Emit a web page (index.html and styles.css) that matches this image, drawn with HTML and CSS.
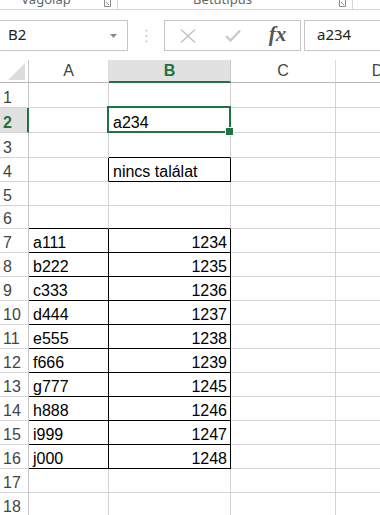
FILE: index.html
```html
<!DOCTYPE html>
<html lang="hu">
<head>
    <meta charset="UTF-8">
    <meta name="viewport" content="width=device-width, initial-scale=1.0">
    <title>Munkafüzet</title>
    <link rel="stylesheet" href="styles.css">
</head>
<body>

    <!-- ribbon group labels (cut off at the top) -->
    <div class="ribbon">
        <div class="group group-1">
            <span class="group-label">Vágólap</span>
            <svg class="launcher" width="7" height="9" viewBox="0 0 7 9"><path d="M0.5 0 V6.5 H6.5 M6.5 0 V6.5 M2 2 L5 5" stroke="#8a8a8a" fill="none"/></svg>
        </div>
        <div class="group group-2">
            <span class="group-label">Betűtípus</span>
            <svg class="launcher" width="7" height="9" viewBox="0 0 7 9"><path d="M0.5 0 V6.5 H6.5 M6.5 0 V6.5 M2 2 L5 5" stroke="#8a8a8a" fill="none"/></svg>
        </div>
    </div>

    <!-- formula bar -->
    <div class="fbar">
        <div class="namebox">
            <span>B2</span>
            <svg width="7" height="4" viewBox="0 0 7 4"><path d="M0 0 H7 L3.5 4 Z" fill="#8a8a8a"/></svg>
        </div>
        <div class="fbar-dots">
            <svg width="3" height="14" viewBox="0 0 3 14"><circle cx="1.5" cy="1.5" r="1" fill="#c4c4c4"/><circle cx="1.5" cy="7" r="1" fill="#c4c4c4"/><circle cx="1.5" cy="12.5" r="1" fill="#c4c4c4"/></svg>
        </div>
        <div class="fxbtns">
            <div class="fxbtn">
                <svg width="16" height="14" viewBox="0 0 16 14"><path d="M1 0.5 L15 13.5 M15 0.5 L1 13.5" stroke="#c2c2c2" stroke-width="1.4" fill="none"/></svg>
            </div>
            <div class="fxbtn">
                <svg width="16" height="13" viewBox="0 0 16 13"><path d="M1 7 L5.5 11.5 L15 1.5" stroke="#cbcbcb" stroke-width="2.4" fill="none"/></svg>
            </div>
            <div class="fxbtn fx">fx</div>
        </div>
        <div class="fxinput">a234</div>
    </div>

    <!-- sheet -->
    <div class="sheet">
        <div class="corner">
            <svg width="17" height="17" viewBox="0 0 17 17"><path d="M17 0 V17 H0 Z" fill="#dcdcdc"/></svg>
        </div>
        <div class="ch">A</div>
        <div class="ch ch-sel">B</div>
        <div class="ch">C</div>
        <div class="ch">D</div>

        <div class="rh">1</div><div class="cell"></div><div class="cell"></div><div class="cell"></div><div class="cell"></div>
        <div class="rh rh-sel">2</div><div class="cell"></div><div class="cell sel">a234</div><div class="cell"></div><div class="cell"></div>
        <div class="rh">3</div><div class="cell"></div><div class="cell bk-b"></div><div class="cell"></div><div class="cell"></div>
        <div class="rh">4</div><div class="cell bk-r"></div><div class="cell bk-r bk-b">nincs találat</div><div class="cell"></div><div class="cell"></div>
        <div class="rh">5</div><div class="cell"></div><div class="cell"></div><div class="cell"></div><div class="cell"></div>
        <div class="rh">6</div><div class="cell bk-b"></div><div class="cell bk-b"></div><div class="cell"></div><div class="cell"></div>

        <div class="rh">7</div><div class="cell bk-r bk-b">a111</div><div class="cell bk-r bk-b num">1234</div><div class="cell"></div><div class="cell"></div>
        <div class="rh">8</div><div class="cell bk-r bk-b">b222</div><div class="cell bk-r bk-b num">1235</div><div class="cell"></div><div class="cell"></div>
        <div class="rh">9</div><div class="cell bk-r bk-b">c333</div><div class="cell bk-r bk-b num">1236</div><div class="cell"></div><div class="cell"></div>
        <div class="rh">10</div><div class="cell bk-r bk-b">d444</div><div class="cell bk-r bk-b num">1237</div><div class="cell"></div><div class="cell"></div>
        <div class="rh">11</div><div class="cell bk-r bk-b">e555</div><div class="cell bk-r bk-b num">1238</div><div class="cell"></div><div class="cell"></div>
        <div class="rh">12</div><div class="cell bk-r bk-b">f666</div><div class="cell bk-r bk-b num">1239</div><div class="cell"></div><div class="cell"></div>
        <div class="rh">13</div><div class="cell bk-r bk-b">g777</div><div class="cell bk-r bk-b num">1245</div><div class="cell"></div><div class="cell"></div>
        <div class="rh">14</div><div class="cell bk-r bk-b">h888</div><div class="cell bk-r bk-b num">1246</div><div class="cell"></div><div class="cell"></div>
        <div class="rh">15</div><div class="cell bk-r bk-b">i999</div><div class="cell bk-r bk-b num">1247</div><div class="cell"></div><div class="cell"></div>
        <div class="rh">16</div><div class="cell bk-r bk-b">j000</div><div class="cell bk-r bk-b num">1248</div><div class="cell"></div><div class="cell"></div>
        <div class="rh">17</div><div class="cell"></div><div class="cell"></div><div class="cell"></div><div class="cell"></div>
        <div class="rh">18</div><div class="cell"></div><div class="cell"></div><div class="cell"></div><div class="cell"></div>
    </div>

</body>
</html>
```

FILE: styles.css
```css
* {
    box-sizing: border-box;
}

body {
    margin: 0;
    background-color: #fff;
    overflow: hidden;
    font-family: "Liberation Sans", Arial, sans-serif;
}

/* ribbon */
.ribbon {
    display: flex;
    height: 10px;
    border-bottom: 1px solid #d5d5d5;
    overflow: hidden;
    font-family: "Noto Sans", sans-serif;
    font-size: 13px;
    color: #666;
}

.group {
    display: flex;
    align-items: flex-start;
    border-right: 1px solid #d5d5d5;
}

.group-1 {
    width: 118px;
}

.group-2 {
    width: 235px;
}

.group-label {
    flex: 1;
    text-align: center;
    line-height: 13px;
    margin-top: -7px;
    padding-right: 12px;
    white-space: nowrap;
}

.launcher {
    margin-right: 6px;
}

/* formula bar */
.fbar {
    display: flex;
    height: 31px;
    margin-top: 10px;
    font-family: "Noto Sans", sans-serif;
    font-size: 15px;
    color: #222;
}

.namebox {
    width: 129px;
    margin-left: -1px;
    border: 1px solid #c6c6c6;
    display: flex;
    align-items: center;
    justify-content: space-between;
    padding: 0 10px 3px 8px;
}

.namebox svg {
    margin-top: 3px;
}

.fbar-dots {
    width: 36px;
    display: flex;
    align-items: center;
    justify-content: center;
}

.fxbtns {
    width: 137px;
    border: 1px solid #c6c6c6;
    display: flex;
}

.fxbtn {
    width: 45px;
    display: flex;
    align-items: center;
    justify-content: center;
}

.fx {
    font-family: "Liberation Serif", serif;
    font-style: italic;
    font-weight: bold;
    font-size: 21px;
    color: #555;
    padding-bottom: 3px;
}

.fxinput {
    flex: 1;
    margin-left: 3px;
    border: 1px solid #c6c6c6;
    border-right: none;
    display: flex;
    align-items: center;
    padding: 0 0 3px 12px;
}

/* sheet */
.sheet {
    display: grid;
    grid-template-columns: 29px 80px 122px 105px 84px;
    grid-template-rows: 23px 25px 25px 25px 24px 24px 23px repeat(12, 24px);
    margin-top: 9px;
    font-size: 16px;
    color: #000;
}

.corner {
    display: flex;
    align-items: flex-end;
    justify-content: flex-end;
    padding: 0 3px 2px 0;
    border-right: 1px solid #c6c6c6;
    border-bottom: 1px solid #b9b9b9;
}

.ch {
    display: flex;
    align-items: center;
    justify-content: center;
    color: #444;
    border-right: 1px solid #dadada;
    border-bottom: 1px solid #b9b9b9;
}

.ch-sel {
    background-color: #e1e1e1;
    color: #217346;
    font-weight: bold;
    border-bottom: 2px solid #217346;
    border-right-color: #c6c6c6;
}

.rh {
    display: flex;
    align-items: flex-end;
    padding-left: 3px;
    line-height: 18px;
    color: #444;
    border-right: 1px solid #c6c6c6;
    border-bottom: 1px solid #d4d4d4;
}

.rh-sel {
    background-color: #e1e1e1;
    color: #217346;
    font-weight: bold;
    border-right: 2px solid #217346;
}

.cell {
    display: flex;
    align-items: flex-end;
    padding: 0 3px 0 4px;
    line-height: 18px;
    white-space: nowrap;
    border-right: 1px solid #d4d4d4;
    border-bottom: 1px solid #d4d4d4;
}

.num {
    justify-content: flex-end;
}

.bk-r {
    border-right-color: #000;
}

.bk-b {
    border-bottom-color: #000;
}

/* active cell */
.sel {
    position: relative;
    z-index: 1;
}

.sel::before {
    content: "";
    position: absolute;
    left: -2px;
    top: -2px;
    right: -1px;
    bottom: -1px;
    border: 2px solid #217346;
}

.sel::after {
    content: "";
    position: absolute;
    right: -4px;
    bottom: -4px;
    width: 7px;
    height: 7px;
    background-color: #217346;
    border: 1px solid #fff;
}
```
